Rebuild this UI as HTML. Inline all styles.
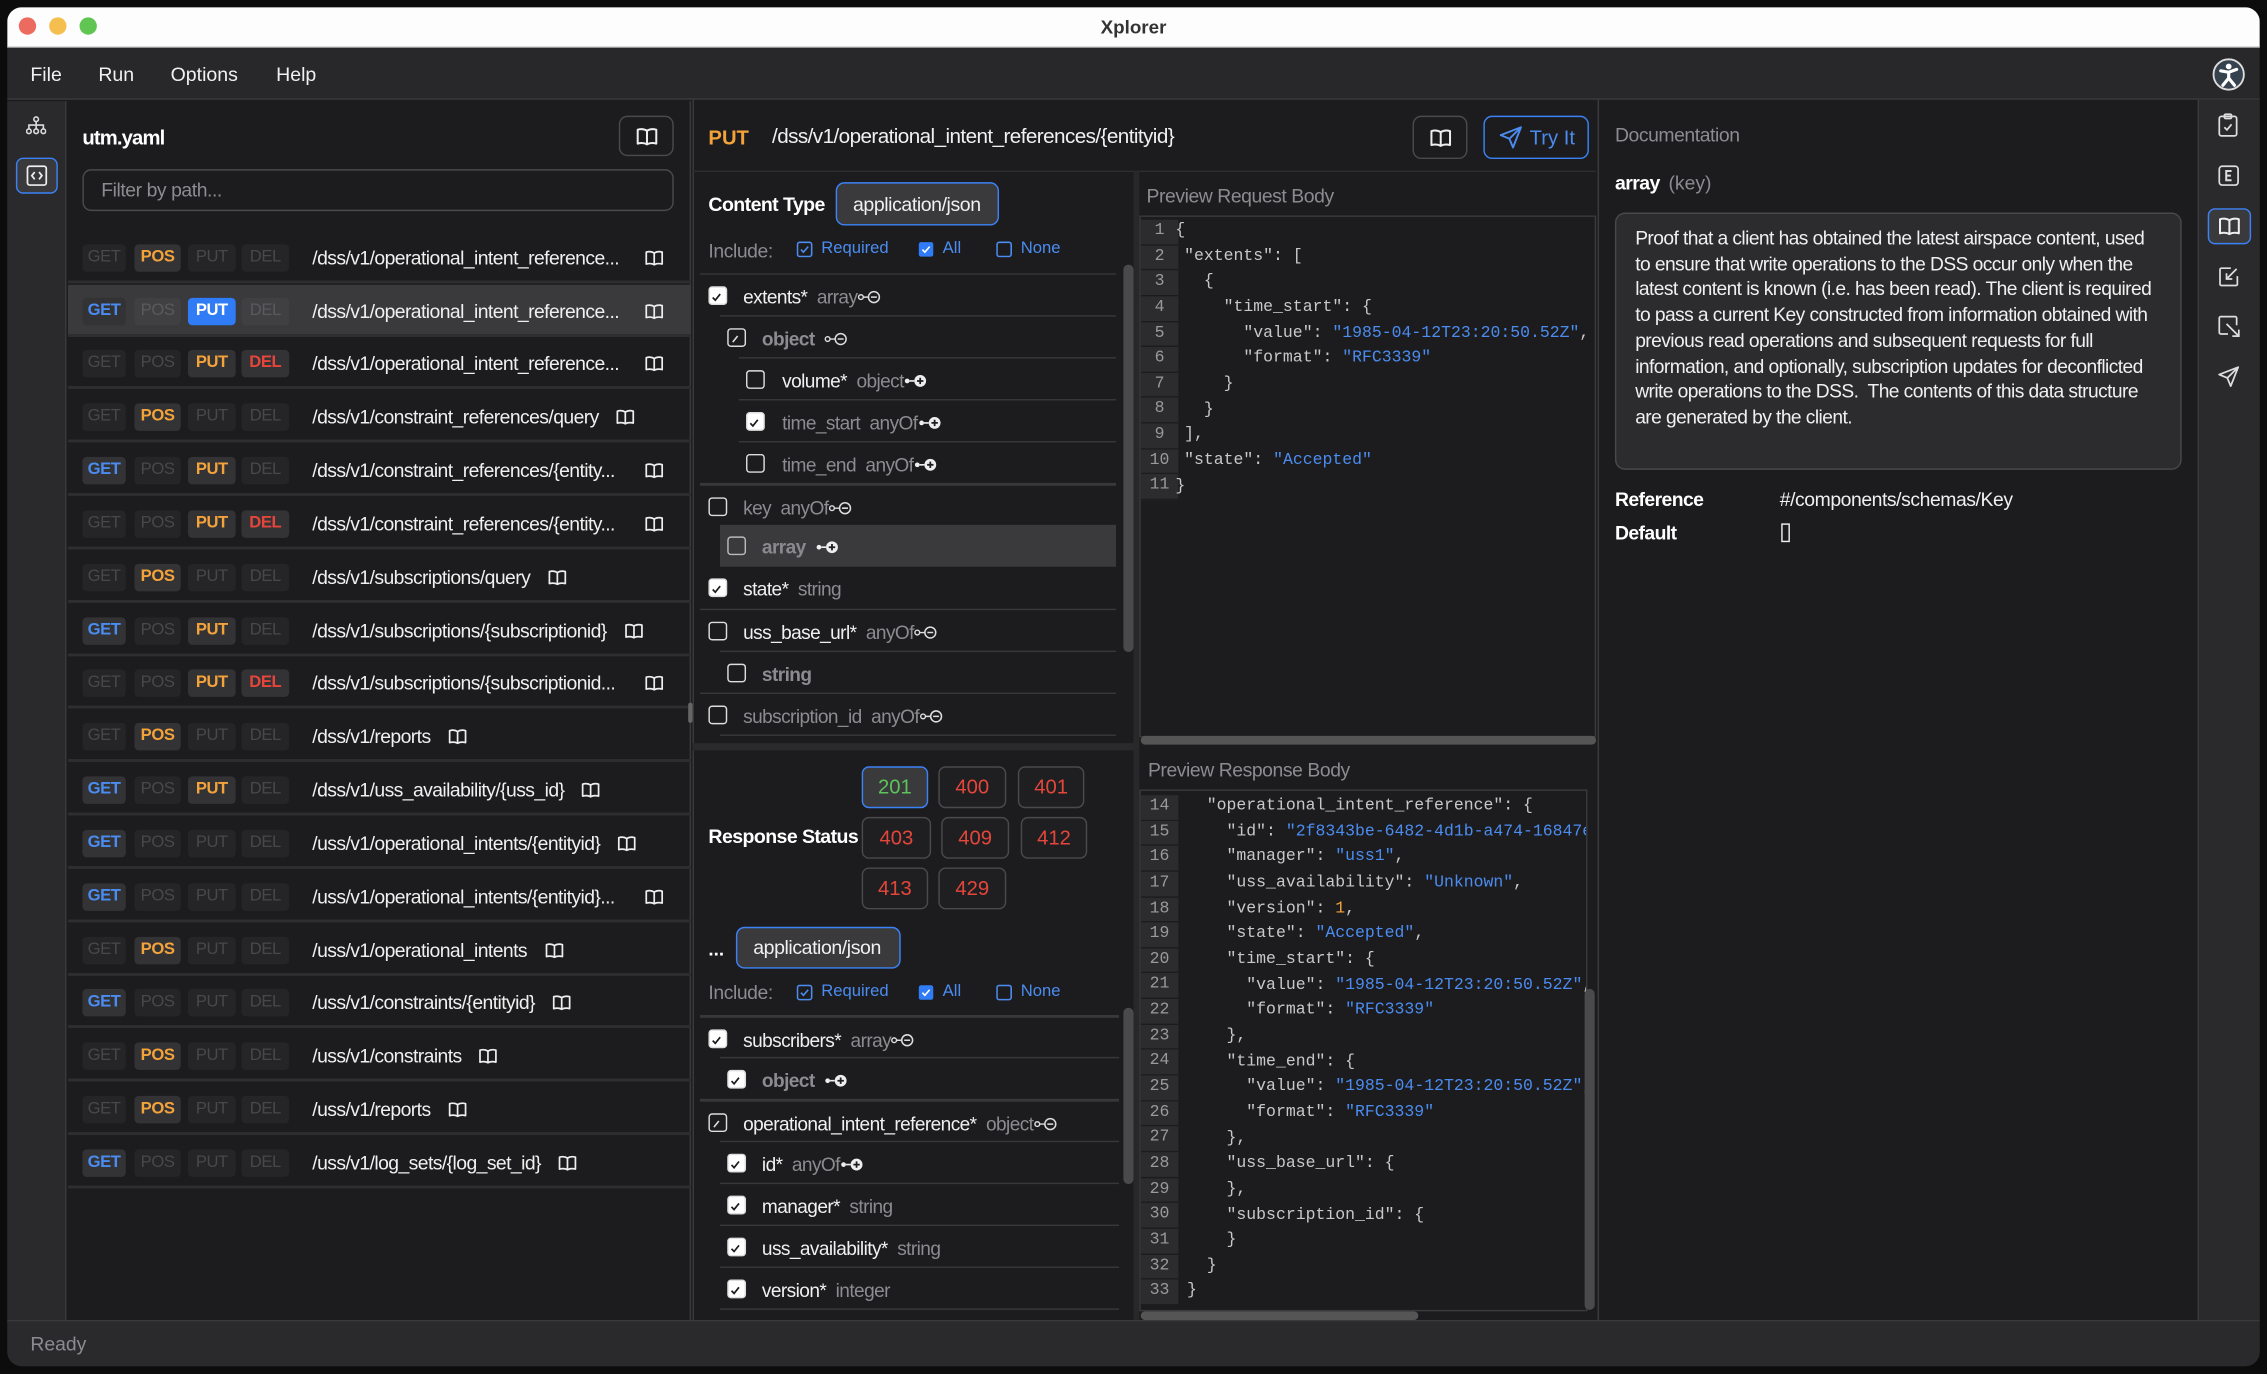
<!DOCTYPE html>
<html><head><meta charset="utf-8">
<style>
*{box-sizing:border-box;margin:0;padding:0}
html,body{width:2267px;height:1374px;overflow:hidden;background:#0c0c0c}
#w{position:absolute;left:0;top:0;width:1568px;height:950.4px;transform:scale(1.44579);transform-origin:0 0;font-family:"Liberation Sans",sans-serif;color:#e8e8e8}
.a{position:absolute}
.win{left:5px;top:5px;width:1558px;height:940px;border-radius:10px;overflow:hidden;background:#1c1c1e}
.t{white-space:nowrap;position:absolute;line-height:1}
.row{position:absolute;left:47px;width:431px;height:36px;border-bottom:2px solid #2e2e30}
.bd{position:absolute;top:9px;height:19px;border-radius:3px;background:#252527;color:#48484b;font-size:11.5px;line-height:19px;text-align:center;letter-spacing:-.3px}
.on{background:#333336}
.g{color:#4b8cf0;font-weight:bold}.p{color:#f3a33a;font-weight:bold}.r{color:#e5463b;font-weight:bold}
.sel{background:#2f7cf6;color:#fff;font-weight:bold}
.path{position:absolute;left:169px;top:11px;font-size:13.4px;letter-spacing:-.4px;color:#f0f0f0;white-space:nowrap}
.bk{display:inline-block;vertical-align:-1px;margin-left:12px}
.tr{position:absolute;height:29px;border-top:1px solid #38383a;right:0}
.cb{position:absolute;width:13px;height:13px;border:1.3px solid #ddd;border-radius:2.5px;top:8px}
.cb.c{background:#fff}
.nm{position:absolute;top:8px;font-size:13.2px;letter-spacing:-.4px;white-space:nowrap;color:#f0f0f0}
.nm .ty{color:#8c8c90}
.gr{color:#8c8c90}.gb{color:#8c8c90;font-weight:bold}
.code{font-family:"Liberation Mono",monospace;font-size:11.4px;color:#c8c8c8;white-space:pre;position:absolute;line-height:17.65px}
.s{color:#4b8cf0}.n{color:#f3a33a}
.ln{position:absolute;left:0;width:26px;background:#2c2c2e;font-family:"Liberation Mono",monospace;font-size:11.4px;color:#9a9a9a;line-height:17.65px;text-align:center}
.ln div{height:17.65px;box-shadow:inset 0 -1px #1c1c1e}
.sb{position:absolute;height:29px;border:1px solid #4a4a4c;border-radius:5px;background:#1f1f21;color:#e5463b;font-size:14px;text-align:center;line-height:27px}
.btn{position:absolute;border:1px solid #4a4a4c;border-radius:6px;background:#1c1c1e}
.ic{position:absolute}
</style></head><body>
<svg width="0" height="0" style="position:absolute">
<defs>
<symbol id="book" viewBox="0 0 14 12"><path d="M1 1.5 Q4.5 0.5 7 2.2 Q9.5 0.5 13 1.5 V10.5 Q9.5 9.6 7 11 Q4.5 9.6 1 10.5 Z M7 2.2 V11" fill="none" stroke="#eee" stroke-width="1.3" stroke-linejoin="round"/></symbol>
<symbol id="mi" viewBox="0 0 22 12"><circle cx="3" cy="6" r="2" fill="none" stroke="#ddd" stroke-width="1.2"/><path d="M5 6H9" stroke="#ddd" stroke-width="1.2"/><circle cx="14" cy="6" r="4.6" fill="none" stroke="#ddd" stroke-width="1.3"/><path d="M11.5 6H16.5" stroke="#ddd" stroke-width="1.3"/></symbol>
<symbol id="pl" viewBox="0 0 22 12"><circle cx="3" cy="6" r="2" fill="#eee"/><path d="M5 6H9" stroke="#eee" stroke-width="1.4"/><circle cx="14" cy="6" r="5" fill="#eee"/><path d="M11.3 6H16.7M14 3.3V8.7" stroke="#1c1c1e" stroke-width="1.5"/></symbol>
<symbol id="ck" viewBox="0 0 13 13"><path d="M3.5 6.8 L5.6 9 L9.6 4" fill="none" stroke="#1c1c1e" stroke-width="1.4"/></symbol>
<symbol id="pt" viewBox="0 0 13 13"><path d="M4.5 9 L8.5 4" stroke="#ddd" stroke-width="1.3"/></symbol>
<symbol id="bck" viewBox="0 0 11 11"><rect x=".6" y=".6" width="9.8" height="9.8" rx="1.5" fill="none" stroke="#4b8cf0" stroke-width="1.1"/><path d="M3 5.6 L4.7 7.4 L8 3.6" fill="none" stroke="#4b8cf0" stroke-width="1.1"/></symbol>
<symbol id="bfil" viewBox="0 0 11 11"><rect x=".5" y=".5" width="10" height="10" rx="1.5" fill="#2f7cf6"/><path d="M3 5.6 L4.7 7.4 L8 3.6" fill="none" stroke="#fff" stroke-width="1.1"/></symbol>
<symbol id="bem" viewBox="0 0 11 11"><rect x=".6" y=".6" width="9.8" height="9.8" rx="1.5" fill="none" stroke="#4b8cf0" stroke-width="1.1"/></symbol>
</defs></svg>
<div id="w">
<div class="a win">
 <div class="a" style="left:0;top:0;width:1558px;height:28px;background:#fdfdfd;border-bottom:1px solid #d0d0d0"></div>
 <div class="a" style="left:8px;top:7px;width:12px;height:12px;border-radius:50%;background:#ec6a5e"></div>
 <div class="a" style="left:29px;top:7px;width:12px;height:12px;border-radius:50%;background:#f4bf4f"></div>
 <div class="a" style="left:50px;top:7px;width:12px;height:12px;border-radius:50%;background:#61c554"></div>
 <div class="t" style="left:0;width:1558px;text-align:center;top:7px;font-size:13px;font-weight:bold;color:#333">Xplorer</div>
 <div class="a" style="left:0;top:28px;width:1558px;height:36px;background:#28282a;border-bottom:1px solid #3a3a3c"></div>
 <div class="t" style="left:16px;top:40px;font-size:13.5px;color:#f0f0f0">File</div>
 <div class="t" style="left:63px;top:40px;font-size:13.5px;color:#f0f0f0">Run</div>
 <div class="t" style="left:113px;top:40px;font-size:13.5px;color:#f0f0f0">Options</div>
 <div class="t" style="left:186px;top:40px;font-size:13.5px;color:#f0f0f0">Help</div>
 <svg class="ic" style="left:1525px;top:35px" width="23" height="23" viewBox="0 0 23 23"><circle cx="11.5" cy="11.5" r="10.5" fill="#36424e" stroke="#ddd" stroke-width="1.3"/><circle cx="11.5" cy="6" r="2" fill="#fff"/><path d="M6 9 L11.5 10 L17 8 M11.5 10 V14 L7.5 19 M11.5 14 L15.5 19" stroke="#fff" stroke-width="2.2" fill="none" stroke-linecap="round"/></svg>
 <div class="a" style="left:0;top:65px;width:41px;height:845px;background:#2a2a2c;border-right:1px solid #3a3a3c"></div>
 <svg class="ic" style="left:13px;top:75px" width="14" height="14" viewBox="0 0 14 14" fill="none" stroke="#ddd" stroke-width="1.1"><circle cx="7" cy="2.5" r="1.6"/><path d="M7 4v2.5M2 9V6.5h10V9M7 6.5V9"/><circle cx="2" cy="10.8" r="1.6"/><circle cx="7" cy="10.8" r="1.6"/><circle cx="12" cy="10.8" r="1.6"/></svg>
 <div class="a" style="left:6px;top:104px;width:29px;height:25px;border:1.5px solid #3b82f6;border-radius:5px;background:#3a3a3c"></div>
 <svg class="ic" style="left:13px;top:109px" width="15" height="15" viewBox="0 0 15 15" fill="none" stroke="#eee" stroke-width="1.2"><rect x="1" y="1" width="13" height="13" rx="1.5"/><path d="M6 5 L4 7.5 L6 10 M9 5 L11 7.5 L9 10"/></svg>
 <div class="a" style="left:41px;top:65px;width:432px;height:845px;background:#1c1c1e;border-right:1px solid #3a3a3c"></div>
 <div class="t" style="left:52px;top:83px;font-size:14px;font-weight:bold;letter-spacing:-.6px;color:#fff">utm.yaml</div>
 <div class="btn" style="left:423px;top:75px;width:38px;height:28px;border-color:#4a4a4c"></div>
 <svg class="ic" style="left:435px;top:83px" width="15" height="13"><use href="#book"/></svg>
 <div class="btn" style="left:52px;top:112px;width:409px;height:29px;border-color:#4a4a4c;border-radius:6px"></div>
 <div class="t" style="left:65px;top:120px;font-size:13.4px;color:#8c8c90;letter-spacing:-.3px">Filter by path...</div>
</div>

<div style="position:absolute;left:0;top:0">
<div class="row" style="top:160px"><div class="bd" style="left:10px;width:30px">GET</div><div class="bd on p" style="left:46px;width:32px">POS</div><div class="bd" style="left:83px;width:33px">PUT</div><div class="bd" style="left:120px;width:33px">DEL</div><div class="path"><span style="display:inline-block;width:218px;overflow:hidden;vertical-align:top">/dss/v1/operational_intent_reference...</span><svg class="bk" width="13" height="11"><use href="#book"/></svg></div></div>
<div class="row" style="top:197px;background:#3a3a3c"><div class="bd on g" style="left:10px;width:30px">GET</div><div class="bd" style="left:46px;width:32px;background:#404043;color:#5a5a5d">POS</div><div class="bd sel" style="left:83px;width:33px">PUT</div><div class="bd" style="left:120px;width:33px;background:#404043;color:#5a5a5d">DEL</div><div class="path"><span style="display:inline-block;width:218px;overflow:hidden;vertical-align:top">/dss/v1/operational_intent_reference...</span><svg class="bk" width="13" height="11"><use href="#book"/></svg></div></div>
<div class="row" style="top:233px"><div class="bd" style="left:10px;width:30px">GET</div><div class="bd" style="left:46px;width:32px">POS</div><div class="bd on p" style="left:83px;width:33px">PUT</div><div class="bd on r" style="left:120px;width:33px">DEL</div><div class="path"><span style="display:inline-block;width:218px;overflow:hidden;vertical-align:top">/dss/v1/operational_intent_reference...</span><svg class="bk" width="13" height="11"><use href="#book"/></svg></div></div>
<div class="row" style="top:270px"><div class="bd" style="left:10px;width:30px">GET</div><div class="bd on p" style="left:46px;width:32px">POS</div><div class="bd" style="left:83px;width:33px">PUT</div><div class="bd" style="left:120px;width:33px">DEL</div><div class="path">/dss/v1/constraint_references/query<svg class="bk" width="13" height="11"><use href="#book"/></svg></div></div>
<div class="row" style="top:307px"><div class="bd on g" style="left:10px;width:30px">GET</div><div class="bd" style="left:46px;width:32px">POS</div><div class="bd on p" style="left:83px;width:33px">PUT</div><div class="bd" style="left:120px;width:33px">DEL</div><div class="path"><span style="display:inline-block;width:218px;overflow:hidden;vertical-align:top">/dss/v1/constraint_references/{entity...</span><svg class="bk" width="13" height="11"><use href="#book"/></svg></div></div>
<div class="row" style="top:344px"><div class="bd" style="left:10px;width:30px">GET</div><div class="bd" style="left:46px;width:32px">POS</div><div class="bd on p" style="left:83px;width:33px">PUT</div><div class="bd on r" style="left:120px;width:33px">DEL</div><div class="path"><span style="display:inline-block;width:218px;overflow:hidden;vertical-align:top">/dss/v1/constraint_references/{entity...</span><svg class="bk" width="13" height="11"><use href="#book"/></svg></div></div>
<div class="row" style="top:381px"><div class="bd" style="left:10px;width:30px">GET</div><div class="bd on p" style="left:46px;width:32px">POS</div><div class="bd" style="left:83px;width:33px">PUT</div><div class="bd" style="left:120px;width:33px">DEL</div><div class="path">/dss/v1/subscriptions/query<svg class="bk" width="13" height="11"><use href="#book"/></svg></div></div>
<div class="row" style="top:418px"><div class="bd on g" style="left:10px;width:30px">GET</div><div class="bd" style="left:46px;width:32px">POS</div><div class="bd on p" style="left:83px;width:33px">PUT</div><div class="bd" style="left:120px;width:33px">DEL</div><div class="path">/dss/v1/subscriptions/{subscriptionid}<svg class="bk" width="13" height="11"><use href="#book"/></svg></div></div>
<div class="row" style="top:454px"><div class="bd" style="left:10px;width:30px">GET</div><div class="bd" style="left:46px;width:32px">POS</div><div class="bd on p" style="left:83px;width:33px">PUT</div><div class="bd on r" style="left:120px;width:33px">DEL</div><div class="path"><span style="display:inline-block;width:218px;overflow:hidden;vertical-align:top">/dss/v1/subscriptions/{subscriptionid...</span><svg class="bk" width="13" height="11"><use href="#book"/></svg></div></div>
<div class="row" style="top:491px"><div class="bd" style="left:10px;width:30px">GET</div><div class="bd on p" style="left:46px;width:32px">POS</div><div class="bd" style="left:83px;width:33px">PUT</div><div class="bd" style="left:120px;width:33px">DEL</div><div class="path">/dss/v1/reports<svg class="bk" width="13" height="11"><use href="#book"/></svg></div></div>
<div class="row" style="top:528px"><div class="bd on g" style="left:10px;width:30px">GET</div><div class="bd" style="left:46px;width:32px">POS</div><div class="bd on p" style="left:83px;width:33px">PUT</div><div class="bd" style="left:120px;width:33px">DEL</div><div class="path">/dss/v1/uss_availability/{uss_id}<svg class="bk" width="13" height="11"><use href="#book"/></svg></div></div>
<div class="row" style="top:565px"><div class="bd on g" style="left:10px;width:30px">GET</div><div class="bd" style="left:46px;width:32px">POS</div><div class="bd" style="left:83px;width:33px">PUT</div><div class="bd" style="left:120px;width:33px">DEL</div><div class="path">/uss/v1/operational_intents/{entityid}<svg class="bk" width="13" height="11"><use href="#book"/></svg></div></div>
<div class="row" style="top:602px"><div class="bd on g" style="left:10px;width:30px">GET</div><div class="bd" style="left:46px;width:32px">POS</div><div class="bd" style="left:83px;width:33px">PUT</div><div class="bd" style="left:120px;width:33px">DEL</div><div class="path"><span style="display:inline-block;width:218px;overflow:hidden;vertical-align:top">/uss/v1/operational_intents/{entityid}...</span><svg class="bk" width="13" height="11"><use href="#book"/></svg></div></div>
<div class="row" style="top:639px"><div class="bd" style="left:10px;width:30px">GET</div><div class="bd on p" style="left:46px;width:32px">POS</div><div class="bd" style="left:83px;width:33px">PUT</div><div class="bd" style="left:120px;width:33px">DEL</div><div class="path">/uss/v1/operational_intents<svg class="bk" width="13" height="11"><use href="#book"/></svg></div></div>
<div class="row" style="top:675px"><div class="bd on g" style="left:10px;width:30px">GET</div><div class="bd" style="left:46px;width:32px">POS</div><div class="bd" style="left:83px;width:33px">PUT</div><div class="bd" style="left:120px;width:33px">DEL</div><div class="path">/uss/v1/constraints/{entityid}<svg class="bk" width="13" height="11"><use href="#book"/></svg></div></div>
<div class="row" style="top:712px"><div class="bd" style="left:10px;width:30px">GET</div><div class="bd on p" style="left:46px;width:32px">POS</div><div class="bd" style="left:83px;width:33px">PUT</div><div class="bd" style="left:120px;width:33px">DEL</div><div class="path">/uss/v1/constraints<svg class="bk" width="13" height="11"><use href="#book"/></svg></div></div>
<div class="row" style="top:749px"><div class="bd" style="left:10px;width:30px">GET</div><div class="bd on p" style="left:46px;width:32px">POS</div><div class="bd" style="left:83px;width:33px">PUT</div><div class="bd" style="left:120px;width:33px">DEL</div><div class="path">/uss/v1/reports<svg class="bk" width="13" height="11"><use href="#book"/></svg></div></div>
<div class="row" style="top:786px"><div class="bd on g" style="left:10px;width:30px">GET</div><div class="bd" style="left:46px;width:32px">POS</div><div class="bd" style="left:83px;width:33px">PUT</div><div class="bd" style="left:120px;width:33px">DEL</div><div class="path">/uss/v1/log_sets/{log_set_id}<svg class="bk" width="13" height="11"><use href="#book"/></svg></div></div>
<div class="a" style="left:476px;top:486px;width:3px;height:14px;background:#666;border-radius:2px"></div>

<div class="t" style="left:490px;top:88px;font-size:14px;font-weight:bold;color:#f3a33a">PUT</div>
<div class="t" style="left:534px;top:88px;font-size:14.3px;letter-spacing:-.4px;color:#f0f0f0">/dss/v1/operational_intent_references/{entityid}</div>
<div class="btn" style="left:977px;top:80px;width:38px;height:30px"></div>
<svg class="ic" style="left:989px;top:89px" width="15" height="13"><use href="#book"/></svg>
<div class="btn" style="left:1026px;top:80px;width:73px;height:30px;border:1.5px solid #3b82f6"></div>
<svg class="ic" style="left:1037px;top:87px" width="16" height="16" viewBox="0 0 16 16" fill="none" stroke="#4b8cf0" stroke-width="1.3" stroke-linejoin="round"><path d="M15 1 L1 6.5 L7 9 L9.5 15 Z M15 1 L7 9"/></svg>
<div class="t" style="left:1058px;top:88px;font-size:14px;color:#4b8cf0">Try It</div>
<div class="a" style="left:479px;top:69px;width:1px;height:845px;background:#3a3a3c"></div>
<div class="a" style="left:479px;top:118px;width:625px;height:1px;background:#2e2e30"></div>

<div class="t" style="left:490px;top:135px;font-size:13.5px;font-weight:bold;letter-spacing:-.4px;color:#fff">Content Type</div>
<div class="a" style="left:578px;top:126px;width:113px;height:30px;border:1.5px solid #3b82f6;border-radius:6px;background:#3a3a3c"></div>
<div class="t" style="left:590px;top:135px;font-size:13.5px;letter-spacing:-.3px;color:#f0f0f0">application/json</div>
<div class="t" style="left:490px;top:167px;font-size:13.4px;color:#8c8c90;letter-spacing:-.3px">Include:</div>
<svg class="ic" style="left:551px;top:167px" width="11" height="11"><use href="#bck"/></svg>
<div class="t" style="left:568px;top:167px;font-size:11.5px;color:#4b8cf0">Required</div>
<svg class="ic" style="left:635px;top:167px" width="11" height="11"><use href="#bfil"/></svg>
<div class="t" style="left:652px;top:167px;font-size:11.5px;color:#4b8cf0">All</div>
<svg class="ic" style="left:689px;top:167px" width="11" height="11"><use href="#bem"/></svg>
<div class="t" style="left:706px;top:167px;font-size:11.5px;color:#4b8cf0">None</div>

<div class="a" style="left:484px;top:189px;width:288px;height:325px;overflow:hidden">
 <div class="tr" style="left:0;top:0"><div class="cb c" style="left:6px"><svg width="11" height="11" viewBox="1 1 11 11"><use href="#ck"/></svg></div><div class="nm" style="left:30px">extents* <span class="ty">&nbsp;array</span><svg width="18" height="11" style="vertical-align:-1px"><use href="#mi"/></svg></div></div>
 <div class="tr" style="left:14px;top:29px"><div class="cb" style="left:5px"><svg width="11" height="11" viewBox="1 1 11 11"><use href="#pt"/></svg></div><div class="nm gb" style="left:29px">object &nbsp;<svg width="18" height="11" style="vertical-align:-1px"><use href="#mi"/></svg></div></div>
 <div class="tr" style="left:27px;top:58px"><div class="cb" style="left:5px"></div><div class="nm" style="left:30px">volume* <span class="ty">&nbsp;object</span><svg width="18" height="11" style="vertical-align:-1px"><use href="#pl"/></svg></div></div>
 <div class="tr" style="left:27px;top:87px"><div class="cb c" style="left:5px"><svg width="11" height="11" viewBox="1 1 11 11"><use href="#ck"/></svg></div><div class="nm gr" style="left:30px">time_start &nbsp;anyOf<svg width="18" height="11" style="vertical-align:-1px"><use href="#pl"/></svg></div></div>
 <div class="tr" style="left:27px;top:116px"><div class="cb" style="left:5px"></div><div class="nm gr" style="left:30px">time_end &nbsp;anyOf<svg width="18" height="11" style="vertical-align:-1px"><use href="#pl"/></svg></div></div>
 <div class="tr" style="left:0;top:145px;border-top-width:2px"><div class="cb" style="left:6px"></div><div class="nm gr" style="left:30px">key &nbsp;anyOf<svg width="18" height="11" style="vertical-align:-1px"><use href="#mi"/></svg></div></div>
 <div class="tr" style="left:14px;top:174px;background:#3a3a3c;border-top:none"><div class="cb" style="left:5px;border-color:#bbb"></div><div class="nm gb" style="left:29px;color:#8a8a8e">array &nbsp;<svg width="18" height="11" style="vertical-align:-1px"><use href="#pl"/></svg></div></div>
 <div class="tr" style="left:0;top:203px;border-top:none"><div class="cb c" style="left:6px"><svg width="11" height="11" viewBox="1 1 11 11"><use href="#ck"/></svg></div><div class="nm" style="left:30px">state* <span class="ty">&nbsp;string</span></div></div>
 <div class="tr" style="left:0;top:232px"><div class="cb" style="left:6px"></div><div class="nm" style="left:30px">uss_base_url* <span class="ty">&nbsp;anyOf</span><svg width="18" height="11" style="vertical-align:-1px"><use href="#mi"/></svg></div></div>
 <div class="tr" style="left:14px;top:261px"><div class="cb" style="left:5px"></div><div class="nm gb" style="left:29px">string</div></div>
 <div class="tr" style="left:0;top:290px"><div class="cb" style="left:6px"></div><div class="nm gr" style="left:30px">subscription_id &nbsp;anyOf<svg width="18" height="11" style="vertical-align:-1px"><use href="#mi"/></svg></div></div>
 <div class="tr" style="left:14px;top:319px"></div>
</div>
<div class="a" style="left:777px;top:183px;width:7px;height:268px;background:#4a4a4c;border-radius:4px"></div>
<div class="a" style="left:479px;top:514px;width:305px;height:5px;background:#2a2a2c"></div>
<div class="a" style="left:784px;top:118px;width:4px;height:796px;background:#28282a"></div>

<div class="t" style="left:490px;top:572px;font-size:13.5px;font-weight:bold;letter-spacing:-.4px;color:#fff">Response Status</div>
<div class="sb" style="left:596px;top:530px;width:46px;background:#3a3a3c;border:1.5px solid #3b82f6;color:#5cc45a">201</div>
<div class="sb" style="left:649px;top:530px;width:47px">400</div>
<div class="sb" style="left:704px;top:530px;width:46px">401</div>
<div class="sb" style="left:596px;top:565px;width:48px">403</div>
<div class="sb" style="left:651px;top:565px;width:47px">409</div>
<div class="sb" style="left:706px;top:565px;width:46px">412</div>
<div class="sb" style="left:596px;top:600px;width:46px">413</div>
<div class="sb" style="left:649px;top:600px;width:47px">429</div>
<div class="t" style="left:490px;top:650px;font-size:13px;font-weight:bold;color:#fff">...</div>
<div class="a" style="left:509px;top:641px;width:114px;height:29px;border:1.5px solid #3b82f6;border-radius:6px;background:#3a3a3c"></div>
<div class="t" style="left:521px;top:649px;font-size:13.5px;letter-spacing:-.3px;color:#f0f0f0">application/json</div>
<div class="t" style="left:490px;top:680px;font-size:13.4px;color:#8c8c90;letter-spacing:-.3px">Include:</div>
<svg class="ic" style="left:551px;top:681px" width="11" height="11"><use href="#bck"/></svg>
<div class="t" style="left:568px;top:681px;font-size:11.5px;color:#4b8cf0">Required</div>
<svg class="ic" style="left:635px;top:681px" width="11" height="11"><use href="#bfil"/></svg>
<div class="t" style="left:652px;top:681px;font-size:11.5px;color:#4b8cf0">All</div>
<svg class="ic" style="left:689px;top:681px" width="11" height="11"><use href="#bem"/></svg>
<div class="t" style="left:706px;top:681px;font-size:11.5px;color:#4b8cf0">None</div>
<div class="a" style="left:484px;top:702px;width:290px;height:212px;overflow:hidden">
 <div class="tr" style="left:0;top:0;border-top-width:2px"><div class="cb c" style="left:6px"><svg width="11" height="11" viewBox="1 1 11 11"><use href="#ck"/></svg></div><div class="nm" style="left:30px">subscribers* <span class="ty">&nbsp;array</span><svg width="18" height="11" style="vertical-align:-1px"><use href="#mi"/></svg></div></div>
 <div class="tr" style="left:14px;top:29px"><div class="cb c" style="left:5px"><svg width="11" height="11" viewBox="1 1 11 11"><use href="#ck"/></svg></div><div class="nm gb" style="left:29px">object &nbsp;<svg width="18" height="11" style="vertical-align:-1px"><use href="#pl"/></svg></div></div>
 <div class="tr" style="left:0;top:58px;border-top-width:2px"><div class="cb" style="left:6px"><svg width="11" height="11" viewBox="1 1 11 11"><use href="#pt"/></svg></div><div class="nm" style="left:30px">operational_intent_reference* <span class="ty">&nbsp;object</span><svg width="18" height="11" style="vertical-align:-1px"><use href="#mi"/></svg></div></div>
 <div class="tr" style="left:14px;top:87px"><div class="cb c" style="left:5px"><svg width="11" height="11" viewBox="1 1 11 11"><use href="#ck"/></svg></div><div class="nm" style="left:29px">id* <span class="ty">&nbsp;anyOf</span><svg width="18" height="11" style="vertical-align:-1px"><use href="#pl"/></svg></div></div>
 <div class="tr" style="left:14px;top:116px"><div class="cb c" style="left:5px"><svg width="11" height="11" viewBox="1 1 11 11"><use href="#ck"/></svg></div><div class="nm" style="left:29px">manager* <span class="ty">&nbsp;string</span></div></div>
 <div class="tr" style="left:14px;top:145px"><div class="cb c" style="left:5px"><svg width="11" height="11" viewBox="1 1 11 11"><use href="#ck"/></svg></div><div class="nm" style="left:29px">uss_availability* <span class="ty">&nbsp;string</span></div></div>
 <div class="tr" style="left:14px;top:174px"><div class="cb c" style="left:5px"><svg width="11" height="11" viewBox="1 1 11 11"><use href="#ck"/></svg></div><div class="nm" style="left:29px">version* <span class="ty">&nbsp;integer</span></div></div>
 <div class="tr" style="left:14px;top:203px"><div class="cb c" style="left:5px"></div></div>
</div>
<div class="a" style="left:777px;top:697px;width:7px;height:122px;background:#4a4a4c;border-radius:4px"></div>

<div class="t" style="left:793px;top:129px;font-size:13.4px;color:#8c8c90;letter-spacing:-.3px">Preview Request Body</div>
<div class="a" style="left:788px;top:149px;width:316px;height:361px;border:1px solid #3a3a3c;background:#1c1c1e;overflow:hidden">
 <div class="ln" style="top:2px"><div>1</div><div>2</div><div>3</div><div>4</div><div>5</div><div>6</div><div>7</div><div>8</div><div>9</div><div>10</div><div>11</div></div>
 <div class="code" style="left:30px;top:2px"><span style="margin-left:-6px">{</span>
"extents": [
  {
    "time_start": {
      "value": <span class="s">"1985-04-12T23:20:50.52Z"</span>,
      "format": <span class="s">"RFC3339"</span>
    }
  }
],
"state": <span class="s">"Accepted"</span>
<span style="margin-left:-6px">}</span></div>
</div>
<div class="a" style="left:789px;top:509px;width:315px;height:6px;background:#555;border-radius:3px"></div>

<div class="t" style="left:794px;top:526px;font-size:13.4px;color:#8c8c90;letter-spacing:-.3px">Preview Response Body</div>
<div class="a" style="left:788px;top:546px;width:310px;height:361px;border:1px solid #3a3a3c;background:#1c1c1e;overflow:hidden">
 <div class="ln" style="top:3px"><div>14</div><div>15</div><div>16</div><div>17</div><div>18</div><div>19</div><div>20</div><div>21</div><div>22</div><div>23</div><div>24</div><div>25</div><div>26</div><div>27</div><div>28</div><div>29</div><div>30</div><div>31</div><div>32</div><div>33</div></div>
 <div class="code" style="left:32px;top:3px">  "operational_intent_reference": {
    "id": <span class="s">"2f8343be-6482-4d1b-a474-16847e</span>
    "manager": <span class="s">"uss1"</span>,
    "uss_availability": <span class="s">"Unknown"</span>,
    "version": <span class="n">1</span>,
    "state": <span class="s">"Accepted"</span>,
    "time_start": {
      "value": <span class="s">"1985-04-12T23:20:50.52Z"</span>,
      "format": <span class="s">"RFC3339"</span>
    },
    "time_end": {
      "value": <span class="s">"1985-04-12T23:20:50.52Z"</span>,
      "format": <span class="s">"RFC3339"</span>
    },
    "uss_base_url": {
    },
    "subscription_id": {
    }
  }
}</div>
</div>
<div class="a" style="left:1096px;top:684px;width:7px;height:222px;background:#4a4a4c;border-radius:4px"></div>
<div class="a" style="left:789px;top:907px;width:192px;height:6px;background:#555;border-radius:3px"></div>

<div class="a" style="left:1105px;top:69px;width:1px;height:845px;background:#3a3a3c"></div>
<div class="t" style="left:1117px;top:87px;font-size:13.4px;color:#8c8c90;letter-spacing:-.3px">Documentation</div>
<div class="t" style="left:1117px;top:120px;font-size:13.5px;font-weight:bold;color:#fff;letter-spacing:-.4px">array</div>
<div class="t" style="left:1154px;top:120px;font-size:13.4px;color:#8c8c90">(key)</div>
<div class="a" style="left:1117px;top:147px;width:392px;height:178px;border:1px solid #48484a;border-radius:7px;background:#2c2c2e"></div>
<div class="t" style="left:1131px;top:156px;font-size:13.3px;line-height:17.7px;letter-spacing:-.4px;color:#f0f0f0">Proof that a client has obtained the latest airspace content, used<br>to ensure that write operations to the DSS occur only when the<br>latest content is known (i.e. has been read). The client is required<br>to pass a current Key constructed from information obtained with<br>previous read operations and subsequent requests for full<br>information, and optionally, subscription updates for deconflicted<br>write operations to the DSS.&nbsp; The contents of this data structure<br>are generated by the client.</div>
<div class="t" style="left:1117px;top:339px;font-size:13.4px;font-weight:bold;color:#fff;letter-spacing:-.4px">Reference</div>
<div class="t" style="left:1231px;top:339px;font-size:13.4px;color:#f0f0f0;letter-spacing:-.3px">#/components/schemas/Key</div>
<div class="t" style="left:1117px;top:362px;font-size:13.4px;font-weight:bold;color:#fff;letter-spacing:-.4px">Default</div>
<div class="a" style="left:1232px;top:362px;width:6px;height:13px;border:1.3px solid #eee"></div>

<div class="a" style="left:1520px;top:69px;width:43px;height:845px;background:#2a2a2c;border-left:1px solid #3a3a3c"></div>
<svg class="ic" style="left:1534px;top:78px" width="14" height="17" viewBox="0 0 14 17" fill="none" stroke="#ddd" stroke-width="1.2"><rect x="1" y="2.5" width="12" height="13.5" rx="1.5"/><rect x="4.5" y="1" width="5" height="3" rx="1"/><path d="M4.5 10 L6.3 11.8 L9.5 8"/></svg>
<svg class="ic" style="left:1534px;top:114px" width="15" height="15" viewBox="0 0 15 15" fill="none" stroke="#ddd" stroke-width="1.2"><rect x="1" y="1" width="13" height="13" rx="2"/><path d="M9.5 4.3H5.8V10.7H9.5M5.8 7.5H9" stroke-width="1.4"/></svg>
<div class="a" style="left:1527px;top:144px;width:30px;height:25px;border:1.5px solid #3b82f6;border-radius:5px;background:#3a3a3c"></div>
<svg class="ic" style="left:1534px;top:150px" width="16" height="13"><use href="#book"/></svg>
<svg class="ic" style="left:1534px;top:184px" width="15" height="15" viewBox="0 0 15 15" fill="none" stroke="#ddd" stroke-width="1.2"><path d="M9 1.5H2.5a1 1 0 0 0-1 1v10a1 1 0 0 0 1 1h10a1 1 0 0 0 1-1V7"/><path d="M13 2 L6 9 M6 5v4h4"/></svg>
<svg class="ic" style="left:1534px;top:218px" width="16" height="16" viewBox="0 0 16 16" fill="none" stroke="#ddd" stroke-width="1.2"><path d="M13 7V2a1 1 0 0 0-1-1H2a1 1 0 0 0-1 1v10a1 1 0 0 0 1 1h5"/><path d="M6 6 L14.5 14.5 M14.5 10v4.5H10"/></svg>
<svg class="ic" style="left:1534px;top:253px" width="15" height="15" viewBox="0 0 16 16" fill="none" stroke="#ddd" stroke-width="1.3" stroke-linejoin="round"><path d="M15 1 L1 6.5 L7 9 L9.5 15 Z M15 1 L7 9"/></svg>

<div class="a" style="left:5px;top:913px;width:1558px;height:32px;background:#2a2a2c;border-top:1px solid #3a3a3c;border-radius:0 0 10px 10px"></div>
<div class="t" style="left:21px;top:923px;font-size:13.4px;color:#8c8c90">Ready</div>
</div>
</div>
</body></html>
